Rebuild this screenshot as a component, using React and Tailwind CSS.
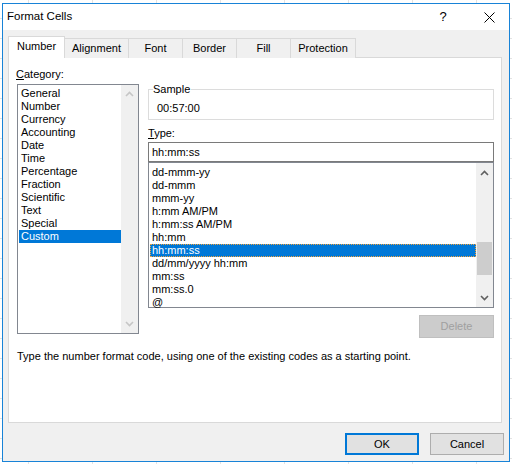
import React from "react";

const categories = [
  "General",
  "Number",
  "Currency",
  "Accounting",
  "Date",
  "Time",
  "Percentage",
  "Fraction",
  "Scientific",
  "Text",
  "Special",
  "Custom",
];

const types = [
  "dd-mmm-yy",
  "dd-mmm",
  "mmm-yy",
  "h:mm AM/PM",
  "h:mm:ss AM/PM",
  "hh:mm",
  "hh:mm:ss",
  "dd/mm/yyyy hh:mm",
  "mm:ss",
  "mm:ss.0",
  "@",
];

const tabs = [
  { label: "Number", w: "w-[57px]" },
  { label: "Alignment", w: "w-[64px]" },
  { label: "Font", w: "w-[54px]" },
  { label: "Border", w: "w-[54px]" },
  { label: "Fill", w: "w-[54px]" },
  { label: "Protection", w: "w-[65px]" },
];

function Chevron({ up, color }) {
  return (
    <svg width="9" height="6" viewBox="0 0 9 6">
      <polyline
        points={up ? "1,5 4.5,1.5 8,5" : "1,1 4.5,4.5 8,1"}
        fill="none"
        stroke={color}
        strokeWidth="1.6"
      />
    </svg>
  );
}

export default function App() {
  return (
    <div
      className="w-[512px] h-[464px] bg-white pt-[3px] pl-[2px] bg-[linear-gradient(to_right,#e3e3e3_1px,transparent_1px),linear-gradient(to_bottom,#e3e3e3_1px,transparent_1px)] bg-[size:64px_20px] bg-[position:28px_18px]"
      style={{ fontFamily: '"Segoe UI", "Liberation Sans", Arial, sans-serif' }}
    >
      <div className="w-[508px] h-[459px] border border-[#1883d7] bg-[#f0f0f0] flex flex-col text-[11px] text-black">
        {/* title bar */}
        <div className="h-[26px] bg-white flex items-center pl-[4px] shrink-0">
          <span className="text-[11.5px]">Format Cells</span>
          <span className="ml-auto w-[14px] text-center text-[13px]">?</span>
          <svg className="ml-[34px] mr-[14px]" width="11" height="11" viewBox="0 0 11 11">
            <path d="M0.5 0.5 L10.5 10.5 M10.5 0.5 L0.5 10.5" stroke="#000" strokeWidth="1" />
          </svg>
        </div>

        <div className="flex-1 px-[5px] pt-[6px] flex flex-col">
          {/* tabs */}
          <div className="flex items-end h-[22px] relative z-10 -mb-px">
            {tabs.map((t, i) =>
              i === 0 ? (
                <div
                  key={t.label}
                  className={`${t.w} h-[22px] bg-white border border-b-0 border-[#d9d9d9] flex items-center justify-center pb-[2px]`}
                >
                  {t.label}
                </div>
              ) : (
                <div
                  key={t.label}
                  className={`${t.w} h-[20px] bg-[#f0f0f0] border border-l-0 border-b-0 border-[#d9d9d9] flex items-center justify-center`}
                >
                  {t.label}
                </div>
              )
            )}
          </div>

          {/* panel */}
          <div className="w-[494px] h-[366px] bg-white border border-[#d9d9d9] flex flex-col pl-[7px]">
            <div className="flex pt-[7px]">
              {/* category column */}
              <div className="w-[130px] flex flex-col">
                <div className="h-[18px] leading-[18px]">
                  <span className="underline">C</span>ategory:
                </div>
                <div className="mt-[1px] ml-[1px] w-[122px] h-[250px] border border-[#828790] flex">
                  <div className="flex-1 pt-[2px] pl-[1px]">
                    {categories.map((c) => (
                      <div
                        key={c}
                        className={`h-[13px] leading-[13px] pl-[2px] ${
                          c === "Custom" ? "bg-[#0078d7] text-white" : ""
                        }`}
                      >
                        {c}
                      </div>
                    ))}
                  </div>
                  <div className="w-[17px] bg-[#f0f0f0] flex flex-col items-center justify-between py-[6px]">
                    <Chevron up color="#c6c6c6" />
                    <Chevron color="#c6c6c6" />
                  </div>
                </div>
              </div>

              {/* right column */}
              <div className="w-[346px] ml-[2px] flex flex-col">
                <div className="relative mt-[24px] h-[31px] border border-[#dcdcdc]">
                  <span className="absolute -top-[8px] left-[4px] bg-white pr-[1px] leading-[14px]">
                    Sample
                  </span>
                  <div className="pt-[11px] pl-[8px] leading-[14px]">00:57:00</div>
                </div>
                <div className="mt-[6px] h-[14px] leading-[14px]">
                  <span className="underline">T</span>ype:
                </div>
                <div className="mt-[2px] h-[20px] border border-[#7a7a7a] flex items-center pl-[3px]">
                  hh:mm:ss
                </div>
                <div className="h-[146px] border border-[#828790] flex">
                  <div className="flex-1 pt-[3px] pl-[1px]">
                    {types.map((t) => (
                      <div
                        key={t}
                        className={`h-[13px] leading-[13px] pl-[2px] ${
                          t === "hh:mm:ss"
                            ? "bg-[#0078d7] text-white outline-1 outline-dotted outline-[#f2a23a] -outline-offset-1"
                            : ""
                        }`}
                      >
                        {t}
                      </div>
                    ))}
                  </div>
                  <div className="w-[17px] bg-[#f0f0f0] flex flex-col items-center pt-[7px] pb-[6px]">
                    <Chevron up color="#606060" />
                    <div className="mt-[66px] w-[15px] h-[33px] bg-[#cdcdcd]" />
                    <div className="flex-1" />
                    <Chevron color="#606060" />
                  </div>
                </div>
                <div className="flex justify-end mt-[7px]">
                  <div className="w-[75px] h-[23px] bg-[#cccccc] border border-[#bfbfbf] text-[#a0a0a0] flex items-center justify-center">
                    Delete
                  </div>
                </div>
              </div>
            </div>
            <div className="mt-[11px] pl-[1px] leading-[14px]">
              Type the number format code, using one of the existing codes as a starting point.
            </div>
          </div>

          {/* buttons */}
          <div className="flex justify-end gap-[11px] mt-[10px]">
            <div className="w-[74px] h-[22px] bg-[#e1e1e1] border-2 border-[#0078d7] flex items-center justify-center">
              OK
            </div>
            <div className="w-[74px] h-[22px] bg-[#e1e1e1] border border-[#adadad] flex items-center justify-center">
              Cancel
            </div>
          </div>
        </div>
      </div>
    </div>
  );
}
